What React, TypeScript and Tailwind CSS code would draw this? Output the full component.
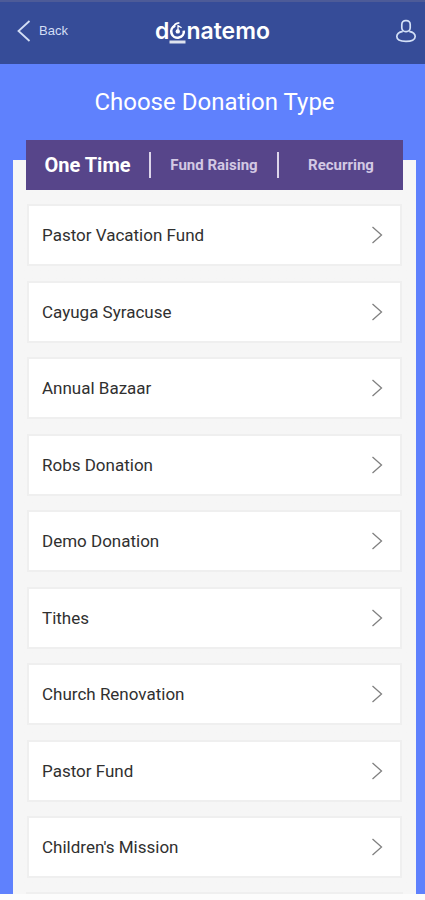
import { useState } from "react"
import clsx from "clsx"

const tabs = ["One Time", "Fund Raising", "Recurring"]

const funds = [
  "Pastor Vacation Fund",
  "Cayuga Syracuse",
  "Annual Bazaar",
  "Robs Donation",
  "Demo Donation",
  "Tithes",
  "Church Renovation",
  "Pastor Fund",
  "Children's Mission",
]

function Logo() {
  return (
    <div
      role="img"
      aria-label="donatemo"
      className="flex items-center font-[Inter,sans-serif] text-[23px] leading-7 font-semibold text-white"
    >
      <span>d</span>
      {/* the first "o" is a coin dropping into a slot */}
      <svg viewBox="0 0 17 28" className="h-7 w-[17px]" fill="none" stroke="currentColor">
        <path d="M6.2 8.6A6.3 6.3 0 1 0 14.8 13.6" strokeWidth="2.6" />
        <path d="M4.6 10.6C5 7.8 7 6 10.4 5.8" strokeWidth="1.8" />
        <circle cx="8.8" cy="14.4" r="2.2" fill="currentColor" stroke="none" />
        <path d="M9 14.2V8.6l3.6 2.2" strokeWidth="1.3" />
        <path d="M.5 25h16" stroke="#dfe3ee" strokeWidth="3" />
      </svg>
      <span>natemo</span>
    </div>
  )
}

function Header() {
  return (
    <header className="grid h-16 shrink-0 grid-cols-3 items-center border-t-2 border-[#4d5b98] bg-[#364c98] px-2 pb-1">
      <button className="flex items-center gap-2 justify-self-start pl-2 font-['Liberation_Sans',sans-serif] text-[13px] leading-4 text-[#d3def5]">
        <svg viewBox="0 0 15 22" className="h-[22px] w-[15px]" fill="none" stroke="currentColor" strokeWidth="1.8">
          <path d="M13.5 1 2.5 11l11 10" />
        </svg>
        Back
      </button>
      <div className="justify-self-center">
        <Logo />
      </div>
      <button aria-label="Profile" className="justify-self-end text-[#d3e0f7]">
        <svg viewBox="0 0 22 24" className="h-6 w-[22px]" fill="none" stroke="currentColor" strokeWidth="1.7">
          <rect x="6.8" y="1.6" width="8.4" height="11" rx="3.8" />
          <path d="M7.8 12.3C4 13 1.8 14.8 1.8 17.6c0 3.2 3.6 4.8 9.2 4.8s9.2-1.6 9.2-4.8c0-2.8-2.2-4.6-6-5.3" />
        </svg>
      </button>
    </header>
  )
}

export default function App() {
  const [active, setActive] = useState("One Time")

  return (
    <div className="flex min-h-screen flex-col bg-[#5f81fd] font-[Roboto,sans-serif]">
      <Header />

      <div className="flex grow flex-col pr-[9px] pl-[13px]">
        <h1 className="py-5 text-center text-2xl leading-9 text-white">Choose Donation Type</h1>

        <main className="flex grow flex-col bg-linear-to-b from-transparent from-[20px] to-[#f6f6f6] to-[20px] px-[13px]">
          <nav className="grid h-[50px] shrink-0 grid-cols-[123px_1fr_126px] items-center bg-[#57458a]">
            {tabs.map((tab, i) => (
              <button
                key={tab}
                onClick={() => setActive(tab)}
                className={clsx(
                  "h-[26px] font-bold whitespace-nowrap",
                  i > 0 && "border-l-2 border-[#ddd5ea]",
                  tab === active ? "text-xl leading-6 text-white" : "text-[15px] leading-6 text-[#d3c9e4]"
                )}
              >
                {tab}
              </button>
            ))}
          </nav>

          <ul className="flex grow flex-col justify-between px-px py-[14px]">
            {funds.map((fund) => (
              <li key={fund}>
                <button className="flex h-[62px] w-full items-center justify-between border-2 border-[#efefef] bg-white pr-[17px] pl-[13px] text-left text-[17px] leading-6 text-[#303030]">
                  {fund}
                  <svg viewBox="0 0 12 18" className="h-[18px] w-3" fill="none" stroke="#808080" strokeWidth="1.3">
                    <path d="M1.5 1 10.5 9l-9 8" />
                  </svg>
                </button>
              </li>
            ))}
          </ul>
          <div className="h-0.5 shrink-0 bg-[#efefef]" />
        </main>
      </div>
      <div className="h-1.5 shrink-0 bg-[#fcfcfc]" />
    </div>
  )
}
